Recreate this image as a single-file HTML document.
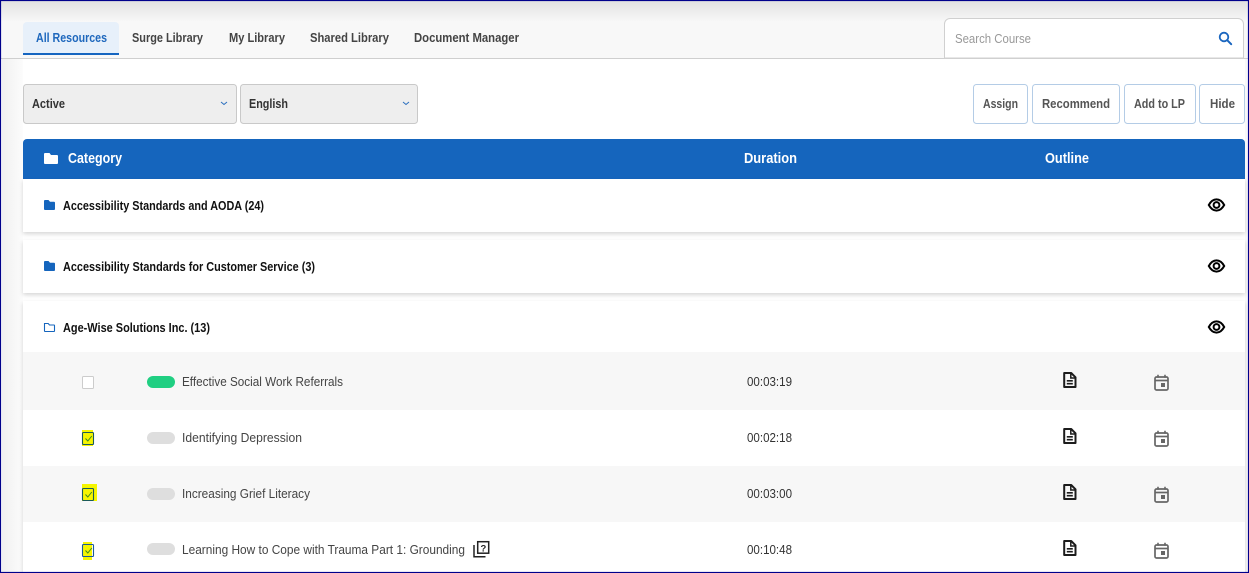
<!DOCTYPE html>
<html><head><meta charset="utf-8"><title>Resources</title>
<style>
html,body{margin:0;padding:0;background:#fff;width:1249px;height:573px;overflow:hidden}
svg{display:block;position:absolute;left:0;top:0}
text{font-family:"Liberation Sans",sans-serif;font-size:13px}
.b{font-weight:700}
</style></head><body>
<svg width="1249" height="573" viewBox="0 0 1249 573" xmlns="http://www.w3.org/2000/svg">
<defs>
<linearGradient id="top" x1="0" y1="0" x2="0" y2="1"><stop offset="0" stop-color="#e0e0e0"/><stop offset="1" stop-color="#f8f8f8"/></linearGradient>
<linearGradient id="left" x1="0" y1="0" x2="1" y2="0"><stop offset="0" stop-color="#f0f0f0"/><stop offset="1" stop-color="#fcfcfc"/></linearGradient>
<filter id="sh" x="-2%" y="-20%" width="104%" height="150%"><feDropShadow dx="0" dy="2" stdDeviation="2" flood-color="#000" flood-opacity=".16"/></filter>
<g id="doc"><path d="M1.200 1h7l4.300 4.300V15H1.200z" fill="none" stroke="#1c1c1c" stroke-width="2" stroke-linejoin="round"/><path d="M7.800 1v5h4.700" fill="none" stroke="#1c1c1c" stroke-width="1.500"/><path d="M3.800 8.800h6M3.800 11.700h6" stroke="#1c1c1c" stroke-width="1.700"/></g>
<g id="cal"><rect x="1" y="3" width="13" height="13" rx="1.500" fill="none" stroke="#666" stroke-width="1.700"/><path d="M1 6.500h13" stroke="#666" stroke-width="1.700"/><path d="M4 .8v3M11 .8v3" stroke="#666" stroke-width="1.600"/><rect x="7" y="9" width="4" height="4" fill="#666"/></g>
<g id="eye"><path d="M.8 6.500C3 2.500 5.800.9 8.500.9s5.500 1.600 7.700 5.600c-2.200 4-5 5.600-7.700 5.600S3 10.500.8 6.500z" fill="none" stroke="#000" stroke-width="2"/><circle cx="8.500" cy="6.500" r="2.900" fill="none" stroke="#000" stroke-width="2"/></g>
<g id="chk"><path d="M3 6.500l2.300 2.500 4-5" fill="none" stroke="#3c8a1e" stroke-width="1"/></g>
</defs>

<rect width="1249" height="573" fill="#fff"/>
<rect x="2" y="59" width="21" height="514" fill="url(#left)"/>
<rect x="1245" y="59" width="2" height="514" fill="#f8f8f8"/>

<!-- top tab bar -->
<rect x="0" y="0" width="1249" height="22" fill="url(#top)"/>
<rect x="0" y="22" width="1249" height="36" fill="#f8f8f8"/>
<rect x="0" y="58" width="1249" height="1" fill="#cfcfcf"/>

<path d="M23 55V26a4 4 0 0 1 4-4h88a4 4 0 0 1 4 4v29z" fill="#e7f0fa"/>
<rect x="23" y="53" width="96" height="2" fill="#1565c0"/>
<text x="36" y="42" textLength="71" lengthAdjust="spacingAndGlyphs" fill="#1f68bd" class="b">All Resources</text>
<text x="132" y="42" textLength="71" lengthAdjust="spacingAndGlyphs" fill="#444" class="b">Surge Library</text>
<text x="229" y="42" textLength="56" lengthAdjust="spacingAndGlyphs" fill="#444" class="b">My Library</text>
<text x="310" y="42" textLength="79" lengthAdjust="spacingAndGlyphs" fill="#444" class="b">Shared Library</text>
<text x="414" y="42" textLength="105" lengthAdjust="spacingAndGlyphs" fill="#444" class="b">Document Manager</text>

<!-- search -->
<path d="M944.500 58V24a5.500 5.500 0 0 1 5.500-5.500h288a5.500 5.500 0 0 1 5.500 5.500v34z" fill="#fff" stroke="#d0d0d0"/>
<text x="955" y="43" textLength="76" lengthAdjust="spacingAndGlyphs" fill="#999">Search Course</text>
<circle cx="1224" cy="37" r="4.300" fill="none" stroke="#1a66bf" stroke-width="1.800"/>
<path d="M1227.200 40.200l4 4" stroke="#1a66bf" stroke-width="2" stroke-linecap="round"/>

<!-- selects -->
<rect x="23.500" y="84.500" width="213" height="39" rx="3" fill="#eee" stroke="#c9c9c9"/>
<text x="32" y="108" textLength="33" lengthAdjust="spacingAndGlyphs" fill="#333" class="b">Active</text>
<path d="M221 102l3 2.500 3-2.500" fill="none" stroke="#2a6fbe" stroke-width="1"/>
<rect x="240.500" y="84.500" width="177" height="39" rx="3" fill="#eee" stroke="#c9c9c9"/>
<text x="249" y="108" textLength="39" lengthAdjust="spacingAndGlyphs" fill="#333" class="b">English</text>
<path d="M403 102l3 2.500 3-2.500" fill="none" stroke="#2a6fbe" stroke-width="1"/>

<!-- buttons -->
<rect x="973.500" y="84.500" width="54" height="39" rx="3" fill="#fff" stroke="#b4cce6"/>
<text x="983" y="108" textLength="35" lengthAdjust="spacingAndGlyphs" fill="#555" class="b">Assign</text>
<rect x="1032.500" y="84.500" width="87" height="39" rx="3" fill="#fff" stroke="#b4cce6"/>
<text x="1042" y="108" textLength="68" lengthAdjust="spacingAndGlyphs" fill="#555" class="b">Recommend</text>
<rect x="1124.500" y="84.500" width="71" height="39" rx="3" fill="#fff" stroke="#b4cce6"/>
<text x="1134" y="108" textLength="51" lengthAdjust="spacingAndGlyphs" fill="#555" class="b">Add to LP</text>
<rect x="1199.500" y="84.500" width="45" height="39" rx="3" fill="#fff" stroke="#b4cce6"/>
<text x="1210" y="108" textLength="25" lengthAdjust="spacingAndGlyphs" fill="#555" class="b">Hide</text>

<!-- table header -->
<path d="M23 179V143a4 4 0 0 1 4-4h1214a4 4 0 0 1 4 4v36z" fill="#1565bd"/>
<path d="M44 154a1 1 0 0 1 1-1h4.500l1.500 2h6a1 1 0 0 1 1 1v7a1 1 0 0 1-1 1H45a1 1 0 0 1-1-1z" fill="#fff"/>
<text x="68" y="163" textLength="54" lengthAdjust="spacingAndGlyphs" fill="#fff" class="b" style="font-size:14.500px">Category</text>
<text x="744" y="163" textLength="53" lengthAdjust="spacingAndGlyphs" fill="#fff" class="b" style="font-size:14.500px">Duration</text>
<text x="1045" y="163" textLength="44" lengthAdjust="spacingAndGlyphs" fill="#fff" class="b" style="font-size:14.500px">Outline</text>

<!-- category rows -->
<rect x="23" y="179" width="1222" height="53" fill="#fff" filter="url(#sh)"/>
<path d="M44 201a1 1 0 0 1 1-1h3.500l1.500 1.700h4a1 1 0 0 1 1 1v6.300a1 1 0 0 1-1 1H45a1 1 0 0 1-1-1z" fill="#1565bd"/>
<text x="63" y="210" textLength="201" lengthAdjust="spacingAndGlyphs" fill="#111" class="b">Accessibility Standards and AODA (24)</text>
<use href="#eye" x="1208" y="198.500"/>

<rect x="23" y="240" width="1222" height="53" fill="#fff" filter="url(#sh)"/>
<path d="M44 262a1 1 0 0 1 1-1h3.500l1.500 1.700h4a1 1 0 0 1 1 1v6.300a1 1 0 0 1-1 1H45a1 1 0 0 1-1-1z" fill="#1565bd"/>
<text x="63" y="271" textLength="252" lengthAdjust="spacingAndGlyphs" fill="#111" class="b">Accessibility Standards for Customer Service (3)</text>
<use href="#eye" x="1208" y="259.500"/>

<rect x="23" y="301" width="1222" height="272" fill="#fff" filter="url(#sh)"/>
<path d="M44.500 323.500h3.700l1.300 1.500h4.500a.5.500 0 0 1 .5.500v5.500a.5.500 0 0 1-.5.500h-9a.5.500 0 0 1-.5-.5z" fill="none" stroke="#1565bd" stroke-width="1.100"/>
<text x="63" y="332" textLength="147" lengthAdjust="spacingAndGlyphs" fill="#111" class="b">Age-Wise Solutions Inc. (13)</text>
<use href="#eye" x="1208" y="320.500"/>

<!-- sub rows -->
<rect x="23" y="352" width="1222" height="58" fill="#f7f7f7"/>
<rect x="23" y="466" width="1222" height="56" fill="#f7f7f7"/>

<rect x="82.500" y="376.500" width="11" height="12" rx="1" fill="#fff" stroke="#ccc"/>
<rect x="147" y="376" width="28" height="12" rx="6" fill="#20cf82"/>
<text x="182" y="386" textLength="161" lengthAdjust="spacingAndGlyphs" fill="#444">Effective Social Work Referrals</text>
<text x="747" y="386" textLength="45" lengthAdjust="spacingAndGlyphs" fill="#333">00:03:19</text>
<use href="#doc" x="1063" y="372"/>
<use href="#cal" x="1154" y="374"/>

<rect x="82" y="430" width="11" height="16" fill="#f5f500"/>
<rect x="82.500" y="432.500" width="11" height="12" rx="1" fill="none" stroke="#1b5a5a" stroke-width="1.100"/>
<use href="#chk" x="82.500" y="432"/>
<rect x="147" y="432" width="28" height="12" rx="6" fill="#dedede"/>
<text x="182" y="442" textLength="120" lengthAdjust="spacingAndGlyphs" fill="#444">Identifying Depression</text>
<text x="747" y="442" textLength="45" lengthAdjust="spacingAndGlyphs" fill="#333">00:02:18</text>
<use href="#doc" x="1063" y="428"/>
<use href="#cal" x="1154" y="430"/>

<rect x="82" y="484" width="15" height="17" fill="#f5f500"/>
<rect x="82.500" y="488.500" width="11" height="12" rx="1" fill="none" stroke="#1b5a5a" stroke-width="1.100"/>
<use href="#chk" x="82.500" y="488"/>
<rect x="147" y="488" width="28" height="12" rx="6" fill="#dedede"/>
<text x="182" y="498" textLength="128" lengthAdjust="spacingAndGlyphs" fill="#444">Increasing Grief Literacy</text>
<text x="747" y="498" textLength="45" lengthAdjust="spacingAndGlyphs" fill="#333">00:03:00</text>
<use href="#doc" x="1063" y="484"/>
<use href="#cal" x="1154" y="486"/>

<rect x="83" y="542" width="9" height="18" fill="#f5f500"/>
<rect x="82.500" y="544.500" width="11" height="12" rx="1" fill="none" stroke="#1b5a9a" stroke-width="1.100"/>
<use href="#chk" x="82.500" y="544"/>
<rect x="147" y="543" width="28" height="12" rx="6" fill="#dedede"/>
<text x="182" y="554" textLength="283" lengthAdjust="spacingAndGlyphs" fill="#444">Learning How to Cope with Trauma Part 1: Grounding</text>
<rect x="477.700" y="541.700" width="11" height="11.500" fill="none" stroke="#222" stroke-width="1.500"/>
<path d="M474 545v11.700h11.500" fill="none" stroke="#222" stroke-width="1.500"/>
<text x="480.500" y="551.500" fill="#222" class="b" style="font-size:9.500px">?</text>
<text x="747" y="554" textLength="45" lengthAdjust="spacingAndGlyphs" fill="#333">00:10:48</text>
<use href="#doc" x="1063" y="540"/>
<use href="#cal" x="1154" y="542"/>

<!-- outer frame -->
<rect x=".5" y=".5" width="1248" height="572" fill="none" stroke="#00008b" stroke-width="1.200"/>
</svg>
</body></html>
